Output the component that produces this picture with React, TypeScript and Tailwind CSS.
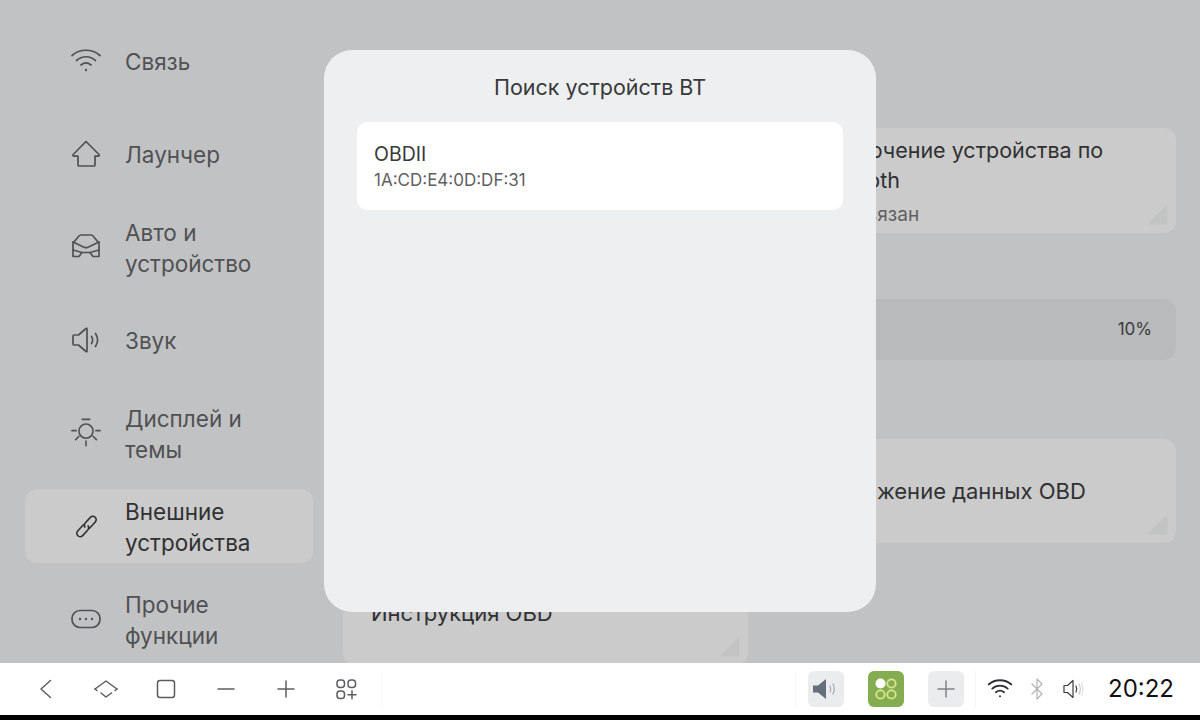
import React from "react";

const S = { fill: "none", stroke: "currentColor", strokeWidth: 1.7, strokeLinecap: "round" as const, strokeLinejoin: "round" as const };

const WifiIcon = ({ size = 32, sw = 1.7 }: { size?: number; sw?: number }) => (
  <svg width={size} height={size} viewBox="0 0 32 32" {...S} strokeWidth={sw}>
    <path d="M2 10.500C10 3.500 22 3.500 30 10.500" />
    <path d="M6.500 15.500C12 10.500 20 10.500 25.500 15.500" />
    <path d="M11 20C14 17.500 18 17.500 21 20" />
    <circle cx="16" cy="25" r="1.200" fill="currentColor" stroke="none" />
  </svg>
);

const HomeIcon = () => (
  <svg width={32} height={32} viewBox="0 0 32 32" {...S}>
    <path d="M16 3.500 29 16.500c.6.8.2 1.600-.8 1.600H25V27c0 .6-.4 1-1 1H9c-.6 0-1-.4-1-1v-8.900H4c-1 0-1.400-.8-.8-1.600Z" />
  </svg>
);

const CarIcon = () => (
  <svg width={32} height={32} viewBox="0 0 32 32" {...S}>
    <path d="M4 11 8.500 5.500C9.200 4.600 10 4 11 4h10c1 0 1.800.6 2.500 1.500L28 11" />
    <path d="M3 11 14 16.200c1.300.6 2.700.6 4 0L29 11" />
    <path d="M3 11v14.500h6l3-4h8l3 4h6V11" />
    <path d="M3 19l9 2.500M29 19l-9 2.500" />
  </svg>
);

const SoundIcon = () => (
  <svg width={32} height={32} viewBox="0 0 32 32" {...S}>
    <path d="M4 11h4.500L16 4.500c.6-.4 1-.2 1 .5v22c0 .7-.4.9-1 .5L8.500 21H4c-.6 0-1-.4-1-1v-8c0-.6.4-1 1-1Z" />
    <path d="M21.500 12.500c1.400 2.200 1.400 4.800 0 7" />
    <path d="M25.500 9.500c2.600 4 2.600 9 0 13" />
  </svg>
);

const SunIcon = () => (
  <svg width={34} height={34} viewBox="0 0 34 34" {...S}>
    <path d="M13 2.500h8" />
    <circle cx="17" cy="15" r="7.500" />
    <path d="M2 14.500h4.500M27.500 14.500H32M17 25.500v5M6 24l3.500-3.500M28 24l-3.500-3.500" />
  </svg>
);

const LinkIcon = () => (
  <svg width={27} height={27} viewBox="0 0 32 32" {...S} strokeWidth={1.900}>
    <g transform="rotate(-47 16 16)">
      <path d="M15 12H5a4 4 0 0 0 0 8h9a4 4 0 0 0 3.800-3" />
      <path d="M17 20h10a4 4 0 0 0 0-8h-9a4 4 0 0 0-3.800 3" />
    </g>
  </svg>
);

const DotsIcon = () => (
  <svg width={32} height={32} viewBox="0 0 32 32" {...S}>
    <rect x="2" y="7.500" width="28" height="17" rx="8" />
    <circle cx="10" cy="16" r="1.200" fill="currentColor" stroke="none" />
    <circle cx="16" cy="16" r="1.200" fill="currentColor" stroke="none" />
    <circle cx="22" cy="16" r="1.200" fill="currentColor" stroke="none" />
  </svg>
);

const nav: { icon: React.ReactNode; lines: string[]; active?: boolean }[] = [
  { icon: <WifiIcon />, lines: ["Связь"] },
  { icon: <HomeIcon />, lines: ["Лаунчер"] },
  { icon: <CarIcon />, lines: ["Авто и", "устройство"] },
  { icon: <SoundIcon />, lines: ["Звук"] },
  { icon: <SunIcon />, lines: ["Дисплей и", "темы"] },
  { icon: <LinkIcon />, lines: ["Внешние", "устройства"], active: true },
  { icon: <DotsIcon />, lines: ["Прочие", "функции"] },
];

const Corner = () => (
  <svg width={20} height={20} viewBox="0 0 20 20" className="absolute right-[8px] bottom-[8px]">
    <path d="M17.500 1 .8 17.700c-.7.9-.4 1.800.8 1.800H18c1 0 1.500-.5 1.500-1.500V1.700c0-1-1.200-1.400-2-.7Z" fill="#c2c4c3" />
  </svg>
);

const BarIcon = ({ children }: { children: React.ReactNode }) => (
  <div className="flex w-[60px] items-center justify-center text-[#5c5d5f]">{children}</div>
);

const B = { fill: "none", stroke: "currentColor", strokeWidth: 1.5, strokeLinecap: "round" as const, strokeLinejoin: "round" as const };

export default function App() {
  return (
    <div className="flex h-[720px] w-[1200px] flex-col overflow-hidden bg-black font-['Inter','Noto_Sans',sans-serif]">
      <main className="relative flex h-[663px] shrink-0 overflow-hidden bg-[#c1c2c4]">
        <nav className="flex w-[343px] shrink-0 flex-col gap-[19px] pt-[24px] pl-[25px]">
          {nav.map((n) => (
            <div
              key={n.lines[0]}
              className={`flex h-[74px] w-[288px] shrink-0 items-center rounded-[12px] pl-[45px] ${
                n.active ? "bg-[#cbcbcb] text-[#303132]" : "text-[#505153]"
              }`}
            >
              <div className="flex w-[32px] shrink-0 justify-center">{n.icon}</div>
              <div className="ml-[23px] pt-[1px] text-[22.5px] leading-[31px]">
                {n.lines.map((l) => (
                  <div key={l}>{l}</div>
                ))}
              </div>
            </div>
          ))}
        </nav>

        <div className="flex w-[405px] shrink-0 flex-col justify-end">
          <div className="relative -mb-[2px] flex h-[105px] shrink-0 items-center rounded-[12px] bg-[#cbcbcb] px-[28px] pt-[2px] text-[22px] text-[#303132]">
            Инструкция OBD
            <Corner />
          </div>
        </div>

        <div className="ml-[23px] flex w-[405px] shrink-0 flex-col pt-[128px]">
          <div className="relative flex h-[105px] flex-col rounded-[12px] bg-[#cbcbcb] px-[27px] pt-[7px] text-[21.5px] leading-[30px] text-[#303132]">
            <div>Подключение устройства по</div>
            <div className="ml-[5px]">Bluetooth</div>
            <div className="mt-[7px] ml-[4px] text-[19px] leading-[26px] text-[#5f6062]">Не привязан</div>
            <Corner />
          </div>
          <div className="mt-[66px] flex h-[61px] items-center justify-end rounded-[12px] bg-[#b9babc] px-[24px] pt-[1px] text-[17px] text-[#3a3b3c]">
            10%
          </div>
          <div className="relative mt-[79px] flex h-[104px] items-center rounded-[12px] bg-[#cbcbcb] px-[27px] text-[22px] text-[#303132]">
            Отображение данных OBD
            <Corner />
          </div>
        </div>

        <div className="absolute top-[50px] left-[324px] flex h-[562px] w-[552px] flex-col rounded-[28px] bg-[#eeeff1] px-[33px]">
          <div className="mt-[22px] text-center text-[21.5px] leading-[30px] text-[#38393a]">Поиск устройств BT</div>
          <div className="mt-[20px] flex h-[88px] flex-col rounded-[10px] bg-white px-[17px] pt-[19px]">
            <div className="text-[19.5px] leading-[26px] text-[#38393a]">OBDII</div>
            <div className="mt-[2px] text-[17px] leading-[22px] text-[#5f6062]">1A:CD:E4:0D:DF:31</div>
          </div>
        </div>
      </main>

      <footer className="flex h-[52px] shrink-0 items-center bg-white pl-[16px]">
        <BarIcon>
          <svg width={24} height={24} viewBox="0 0 24 24" {...B}><path d="M17.500 3.500 8 12l9.500 8.500" transform="translate(-1 0)" /></svg>
        </BarIcon>
        <BarIcon>
          <svg width={26} height={26} viewBox="0 0 26 26" {...B}>
            <path d="M2 13 13 5 24 13" />
            <path d="M2 13 4 14.500M24 13 22 14.500" />
            <path d="M8 17 13 21 18.500 17" />
          </svg>
        </BarIcon>
        <BarIcon>
          <svg width={20} height={20} viewBox="0 0 20 20" {...B}><rect x="1.500" y="1.500" width="17" height="17" rx="2.500" /></svg>
        </BarIcon>
        <BarIcon>
          <svg width={20} height={20} viewBox="0 0 20 20" {...B}><path d="M2 10h16" /></svg>
        </BarIcon>
        <BarIcon>
          <svg width={20} height={20} viewBox="0 0 20 20" {...B}><path d="M2 10h16M10 2v16" /></svg>
        </BarIcon>
        <BarIcon>
          <svg width={22} height={22} viewBox="0 0 22 22" {...B}>
            <rect x="2" y="2" width="7.500" height="7.500" rx="3" />
            <rect x="13" y="2" width="7.500" height="7.500" rx="3" />
            <rect x="2" y="13" width="7.500" height="7.500" rx="3" />
            <path d="M13 16.800h8M17 12.800v8" />
          </svg>
        </BarIcon>
        <div className="ml-[5px] h-[36px] w-px bg-[#f5f5f6]" />

        <div className="ml-[413px] h-[36px] w-px bg-[#f5f5f6]" />
        <div className="ml-[12px] flex h-[36px] w-[36px] items-center justify-center rounded-[6px] bg-[#ebecee]">
          <svg width={28} height={24} viewBox="0 0 28 24">
            <path d="M1 8.500h5L14 2v20l-8-6.500H1Z" fill="#66707c" />
            <path d="M18 9c1 2 1 4 0 6M21 7c1.500 3 1.500 7 0 10" fill="none" stroke="#a6a9ad" strokeWidth="1.200" strokeLinecap="round" />
          </svg>
        </div>
        <div className="ml-[24px] flex h-[36px] w-[36px] items-center justify-center rounded-[6px] bg-[#84ac50]">
          <svg width={26} height={26} viewBox="0 0 26 26">
            <circle cx="7.500" cy="7.500" r="5" fill="#fff" />
            <circle cx="18.500" cy="7.500" r="4.200" fill="none" stroke="#dbe78a" strokeWidth="1.800" />
            <circle cx="7.500" cy="18.500" r="4.200" fill="none" stroke="#dbe78a" strokeWidth="1.800" />
            <circle cx="18.500" cy="18.500" r="4.200" fill="none" stroke="#dbe78a" strokeWidth="1.800" />
          </svg>
        </div>
        <div className="ml-[24px] flex h-[36px] w-[36px] items-center justify-center rounded-[6px] bg-[#ebecee] text-[#7f8388]">
          <svg width={20} height={20} viewBox="0 0 20 20" {...B}><path d="M2 10h16M10 2v16" /></svg>
        </div>
        <div className="ml-[11px] h-[36px] w-px bg-[#f5f5f6]" />

        <div className="ml-[11px] text-[#2f3032]"><WifiIcon size={26} sw={2.200} /></div>
        <div className="ml-[12px] text-[#b2b4b7]">
          <svg width={24} height={24} viewBox="0 0 24 24" {...B} strokeWidth={1.200}>
            <path d="M7 7l10 10-5 5V2l5 5L7 17" />
          </svg>
        </div>
        <div className="ml-[12px] text-[#3c3d3f]">
          <svg width={24} height={24} viewBox="0 0 24 24" {...B} strokeWidth={1.200}>
            <path d="M3 8.500h3.500L12 3.500v17L6.500 15.500H3Z" />
            <path d="M15 9c1 2 1 4 0 6" />
            <path d="M18 7c1.600 3 1.600 7 0 10" stroke="#c6c8ca" />
            <path d="M20.500 6c2 4 2 8 0 12" stroke="#dfe0e1" />
          </svg>
        </div>
        <div className="ml-[23px] text-[24px] leading-none text-[#111]">20:22</div>
      </footer>
      <div className="h-[5px] shrink-0 bg-black" />
    </div>
  );
}
